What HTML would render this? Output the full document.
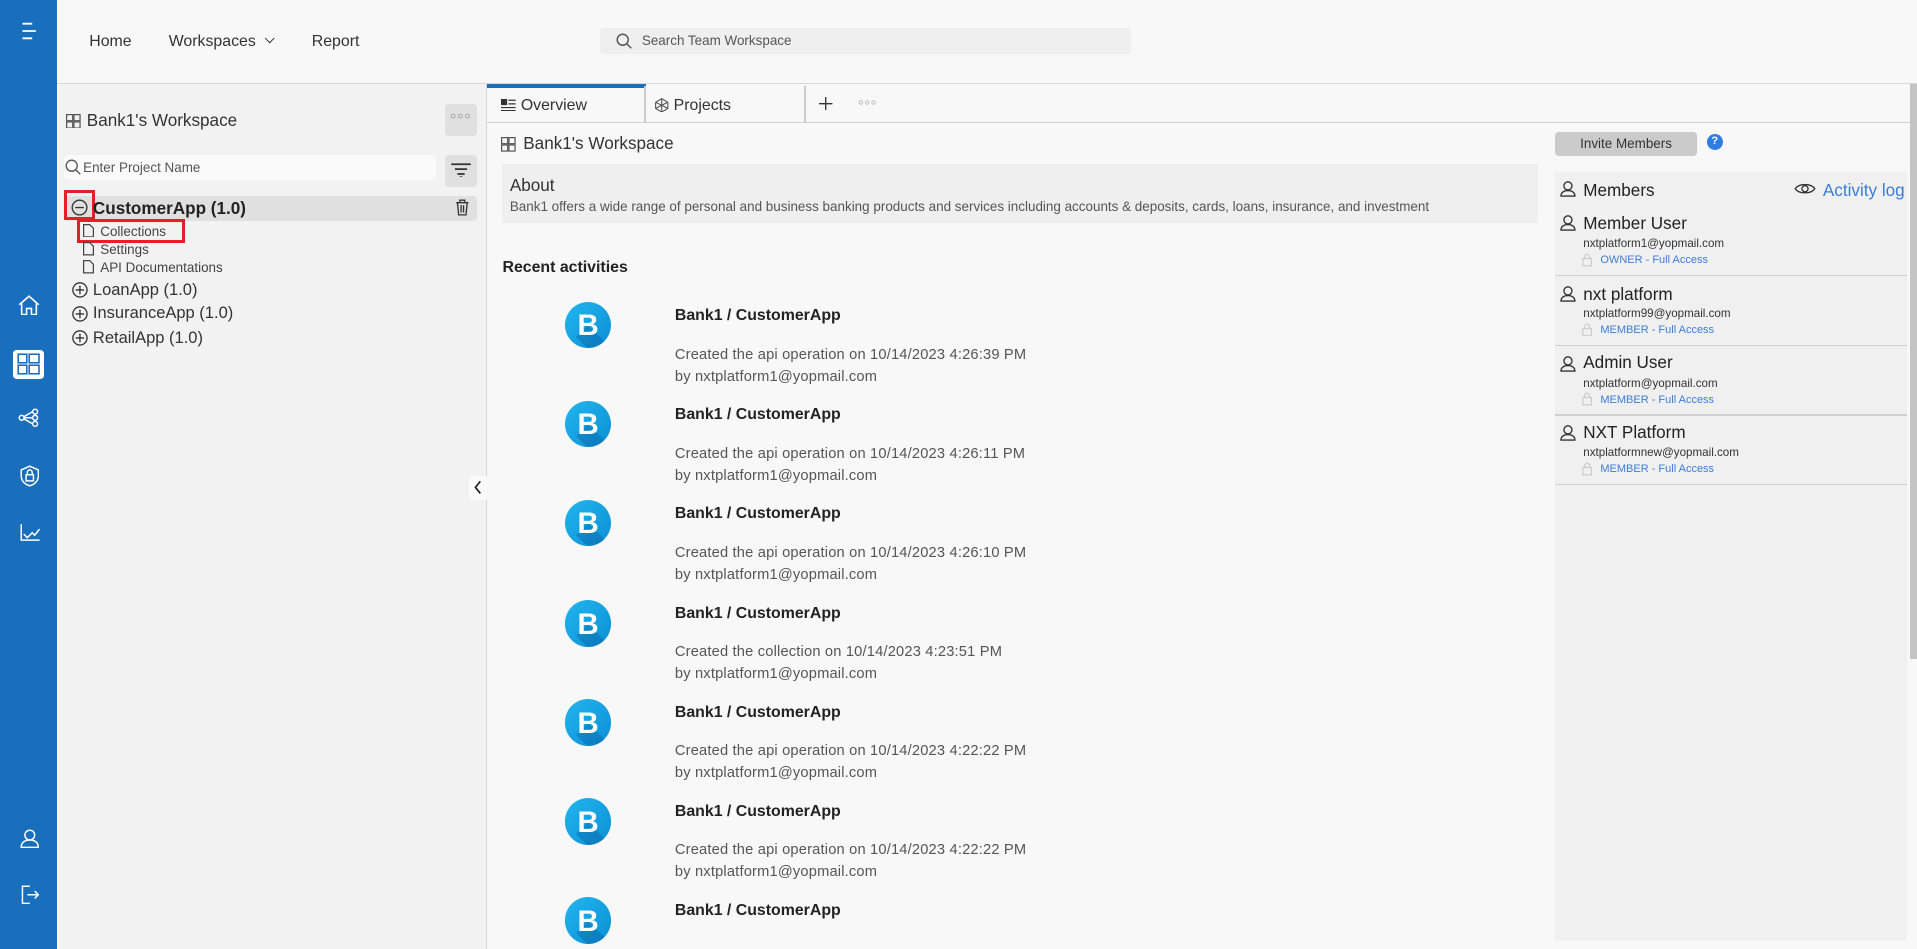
<!DOCTYPE html>
<html><head><meta charset="utf-8"><style>
html{zoom:1.2226}
*{box-sizing:border-box;margin:0;padding:0}
body{width:1568px;height:776px;overflow:hidden;background:#f8f8f8;font-family:"Liberation Sans",sans-serif;color:#333;position:relative}
.a{position:absolute}
.side{left:0;top:0;width:47px;height:776px;background:#1a6fbd}
.top{left:47px;top:0;width:1521px;height:69px;background:#f8f8f8;border-bottom:1px solid #d8d8d8}
.nav{font-size:13px;color:#333;top:26px}
.left{left:48px;top:69px;width:350px;height:707px;background:#f2f2f2;border-right:1px solid #d6d6d6}
.t{white-space:nowrap}
.sub{font-size:11px;color:#444}
.app{font-size:13.5px;color:#333}
.act-logo{width:38px;height:38px;border-radius:50%;background:linear-gradient(135deg,#22b5ee,#0b8fd6);overflow:hidden}
.act-logo:after{content:"";position:absolute;left:19px;top:19px;width:40px;height:14px;background:rgba(0,60,120,.25);transform:rotate(45deg);transform-origin:0 0}
.act-logo b{position:absolute;left:0;top:6px;width:38px;text-align:center;color:#fff;font:900 24px "Liberation Sans",sans-serif;z-index:2}
.at{font-size:13px;font-weight:bold;color:#222}
.al{font-size:12px;color:#555;letter-spacing:.15px}
.mem{font-size:14px;color:#222}
.em{font-size:9.5px;color:#333}
.role{font-size:9px;color:#3b7dd8}
.sep{left:1272px;width:288px;height:1px;background:#d0d0d0}
.lk{position:absolute;left:1293px}
</style></head><body>
<div class="a side">
 <svg class="a" style="left:16px;top:16px" width="16" height="18" viewBox="0 0 16 18" fill="none" stroke="#fff" stroke-width="1.5"><path d="M2 3h8M2 9h11M2 15h8"/></svg>
 <svg class="a" style="left:15px;top:241px" width="18" height="17" viewBox="0 0 18 17" fill="none" stroke="#fff" stroke-width="1.3"><path d="M1 8L9 1l8 7M3 7v9h4v-5h4v5h4V7"/></svg>
 <div class="a" style="left:11px;top:286px;width:25px;height:24px;background:#fff;border-radius:3px"></div>
 <svg class="a" style="left:14px;top:289px" width="19" height="18" viewBox="0 0 19 18" fill="none" stroke="#1a6fbd" stroke-width="1.3"><rect x="1" y="1" width="7" height="7"/><rect x="10" y="1" width="8" height="7"/><rect x="1" y="10" width="7" height="7"/><rect x="10" y="10" width="8" height="7"/></svg>
 <svg class="a" style="left:15px;top:334px" width="18" height="16" viewBox="0 0 18 16" fill="none" stroke="#fff" stroke-width="1.2"><circle cx="3" cy="8" r="2"/><circle cx="14" cy="3" r="2"/><circle cx="14" cy="8" r="2"/><circle cx="14" cy="13" r="2"/><path d="M5 8h7M5 7l7-4M5 9l7 4"/></svg>
 <svg class="a" style="left:16px;top:380px" width="16" height="18" viewBox="0 0 16 18" fill="none" stroke="#fff" stroke-width="1.2"><path d="M8 1l7 3v5c0 4-3 7-7 8-4-1-7-4-7-8V4z"/><rect x="5" y="8" width="6" height="5"/><path d="M6 8V6a2 2 0 0 1 4 0v2"/></svg>
 <svg class="a" style="left:16px;top:428px" width="17" height="15" viewBox="0 0 17 15" fill="none" stroke="#fff" stroke-width="1.2"><path d="M1 1v13h15M3 9l3 3 4-4 2 2 4-5"/></svg>
 <svg class="a" style="left:16px;top:678px" width="16" height="16" viewBox="0 0 16 16" fill="none" stroke="#fff" stroke-width="1.2"><circle cx="8" cy="5" r="4"/><path d="M1 15c0-4 3-6 7-6s7 2 7 6z"/></svg>
 <svg class="a" style="left:16px;top:724px" width="16" height="16" viewBox="0 0 16 16" fill="none" stroke="#fff" stroke-width="1.2"><path d="M8 1H2v14h6M6 8h9M12 5l3 3-3 3"/></svg>
</div>
<div class="a top"></div>
<div class="a nav t" style="left:73px;top:27px">Home</div>
<div class="a nav t" style="left:138px;top:27px">Workspaces <span style="display:inline-block;width:6px;height:6px;border-right:1.3px solid #333;border-bottom:1.3px solid #333;transform:rotate(45deg);margin:0 0 3px 5px"></span></div>
<div class="a nav t" style="left:255px;top:27px">Report</div>
<div class="a" style="left:491px;top:23px;width:434px;height:21px;background:#efefef;border-radius:2px"></div>
<svg class="a" style="left:504px;top:27px" width="13" height="13" viewBox="0 0 13 13" fill="none" stroke="#555" stroke-width="1.2"><circle cx="5.5" cy="5.5" r="4.5"/><path d="M9 9l3.5 3.5"/></svg>
<div class="a t" style="left:525px;top:27px;font-size:11px;color:#555">Search Team Workspace</div>

<div class="a left"></div>
<svg class="a" style="left:54px;top:93px" width="12" height="12" viewBox="0 0 12 12" fill="none" stroke="#555"><rect x=".5" y=".5" width="5" height="5"/><rect x="6.5" y=".5" width="5" height="5"/><rect x=".5" y="6.5" width="5" height="5"/><rect x="6.5" y="6.5" width="5" height="5"/></svg>
<div class="a t" style="left:71px;top:91px;font-size:14px;color:#333">Bank1's Workspace</div>
<div class="a" style="left:364px;top:85px;width:26px;height:26px;background:#e0e0e0;border-radius:3px;font-size:8px;color:#666;text-align:center;line-height:22px;letter-spacing:1px">○○○</div>
<div class="a" style="left:52px;top:127px;width:305px;height:20px;background:#fafafa;border-radius:3px"></div>
<svg class="a" style="left:53px;top:130px" width="13" height="13" viewBox="0 0 13 13" fill="none" stroke="#555" stroke-width="1.1"><circle cx="5.5" cy="5.5" r="4.5"/><path d="M9 9l3.5 3.5"/></svg>
<div class="a t" style="left:68px;top:131px;font-size:11px;color:#555">Enter Project Name</div>
<div class="a" style="left:364px;top:127px;width:26px;height:26px;background:#e0e0e0;border-radius:3px"></div>
<svg class="a" style="left:368px;top:133px" width="18" height="12" viewBox="0 0 18 12" stroke="#333" stroke-width="1.4"><path d="M1 1h16M4 5h10M6 9h6M8 11.5h2"/></svg>
<div class="a" style="left:52px;top:160px;width:338px;height:21px;background:#e0e0e0;border-radius:3px"></div>
<div class="a" style="left:52px;top:155px;width:26px;height:25px;border:3px solid #e32027"></div>
<svg class="a" style="left:58px;top:163px" width="14" height="14" viewBox="0 0 14 14" fill="none" stroke="#333" stroke-width="1.1"><circle cx="7" cy="7" r="6"/><path d="M3.5 7h7"/></svg>
<div class="a t" style="left:76px;top:163px;font-size:14px;font-weight:bold;color:#222">CustomerApp (1.0)</div>
<svg class="a" style="left:372px;top:163px" width="12" height="14" viewBox="0 0 12 14" fill="none" stroke="#333" stroke-width="1.1"><path d="M1 3h10M4 3V1h4v2M2 3l1 10h6l1-10M5 5v6M7 5v6"/></svg>
<div class="a" style="left:63px;top:179px;width:88px;height:20px;border:3px solid #e32027"></div>
<svg class="a" style="left:68px;top:183px" width="9" height="11" viewBox="0 0 9 11" fill="none" stroke="#444"><path d="M.5.5h5l3 3v7h-8z"/></svg>
<div class="a t sub" style="left:82px;top:183px">Collections</div>
<svg class="a" style="left:68px;top:198px" width="9" height="11" viewBox="0 0 9 11" fill="none" stroke="#444"><path d="M.5.5h5l3 3v7h-8z"/></svg>
<div class="a t sub" style="left:82px;top:198px">Settings</div>
<svg class="a" style="left:68px;top:213px" width="9" height="11" viewBox="0 0 9 11" fill="none" stroke="#444"><path d="M.5.5h5l3 3v7h-8z"/></svg>
<div class="a t sub" style="left:82px;top:213px">API Documentations</div>
<svg class="a" style="left:59px;top:231px" width="13" height="13" viewBox="0 0 13 13" fill="none" stroke="#333" stroke-width="1.1"><circle cx="6.5" cy="6.5" r="5.8"/><path d="M3 6.5h7M6.5 3v7"/></svg>
<div class="a t app" style="left:76px;top:230px">LoanApp (1.0)</div>
<svg class="a" style="left:59px;top:250px" width="13" height="13" viewBox="0 0 13 13" fill="none" stroke="#333" stroke-width="1.1"><circle cx="6.5" cy="6.5" r="5.8"/><path d="M3 6.5h7M6.5 3v7"/></svg>
<div class="a t app" style="left:76px;top:249px">InsuranceApp (1.0)</div>
<svg class="a" style="left:59px;top:270px" width="13" height="13" viewBox="0 0 13 13" fill="none" stroke="#333" stroke-width="1.1"><circle cx="6.5" cy="6.5" r="5.8"/><path d="M3 6.5h7M6.5 3v7"/></svg>
<div class="a t app" style="left:76px;top:269px">RetailApp (1.0)</div>
<div class="a" style="left:384px;top:389px;width:14px;height:20px;background:#fafafa;border-radius:3px 0 0 3px"></div>
<svg class="a" style="left:387px;top:393px" width="8" height="12" viewBox="0 0 8 12" fill="none" stroke="#222" stroke-width="1.4"><path d="M6 1L2 6l4 5"/></svg>

<!-- tabs -->
<div class="a" style="left:398px;top:100px;width:1164px;height:1px;background:#d0d0d0"></div>
<div class="a" style="left:398px;top:69px;width:130px;height:3px;background:#1a6fbd"></div>
<div class="a" style="left:527px;top:70px;width:1px;height:31px;background:#ccc"></div>
<div class="a" style="left:658px;top:70px;width:1px;height:31px;background:#ccc"></div>
<svg class="a" style="left:410px;top:81px" width="12" height="10" viewBox="0 0 12 10"><rect x="0" y="0" width="5" height="5" fill="#333"/><path d="M6 1h6M6 4h6M0 7h12M0 9.5h12" stroke="#333"/></svg>
<div class="a t" style="left:426px;top:79px;font-size:13px;color:#333">Overview</div>
<svg class="a" style="left:536px;top:80px" width="11" height="12" viewBox="0 0 11 12" fill="none" stroke="#555" stroke-width=".9"><path d="M5.5 .5l5 3v5l-5 3-5-3v-5zM5.5.5v11M.5 3.5l10 5M10.5 3.5l-10 5"/></svg>
<div class="a t" style="left:551px;top:79px;font-size:13px;color:#333">Projects</div>
<svg class="a" style="left:670px;top:79px" width="11" height="11" stroke="#333" stroke-width="1.1"><path d="M5.5 0v11M0 5.5h11"/></svg>
<div class="a t" style="left:702px;top:79px;font-size:7px;color:#666;letter-spacing:1px">○○○</div>

<svg class="a" style="left:410px;top:112px" width="12" height="12" viewBox="0 0 12 12" fill="none" stroke="#555"><rect x=".5" y=".5" width="5" height="5"/><rect x="6.5" y=".5" width="5" height="5"/><rect x=".5" y="6.5" width="5" height="5"/><rect x="6.5" y="6.5" width="5" height="5"/></svg>
<div class="a t" style="left:428px;top:110px;font-size:14px;color:#333">Bank1's Workspace</div>
<div class="a" style="left:411px;top:134px;width:847px;height:48px;background:#efefef"></div>
<div class="a t" style="left:417px;top:144px;font-size:14px;color:#333">About</div>
<div class="a t" style="left:417px;top:163px;font-size:11px;color:#555">Bank1 offers a wide range of personal and business banking products and services including accounts &amp; deposits, cards, loans, insurance, and investment</div>
<div class="a t" style="left:411px;top:212px;font-size:13px;font-weight:bold;color:#222">Recent activities</div>

<div class="a act-logo" style="left:462px;top:247px"><b>B</b></div>
<div class="a t at" style="left:552px;top:251px">Bank1 / CustomerApp</div>
<div class="a t al" style="left:552px;top:284px">Created the api operation on 10/14/2023 4:26:39 PM</div>
<div class="a t al" style="left:552px;top:302px">by nxtplatform1@yopmail.com</div>

<div class="a act-logo" style="left:462px;top:328px"><b>B</b></div>
<div class="a t at" style="left:552px;top:332px">Bank1 / CustomerApp</div>
<div class="a t al" style="left:552px;top:365px">Created the api operation on 10/14/2023 4:26:11 PM</div>
<div class="a t al" style="left:552px;top:383px">by nxtplatform1@yopmail.com</div>

<div class="a act-logo" style="left:462px;top:409px"><b>B</b></div>
<div class="a t at" style="left:552px;top:413px">Bank1 / CustomerApp</div>
<div class="a t al" style="left:552px;top:446px">Created the api operation on 10/14/2023 4:26:10 PM</div>
<div class="a t al" style="left:552px;top:464px">by nxtplatform1@yopmail.com</div>

<div class="a act-logo" style="left:462px;top:491px"><b>B</b></div>
<div class="a t at" style="left:552px;top:495px">Bank1 / CustomerApp</div>
<div class="a t al" style="left:552px;top:527px">Created the collection on 10/14/2023 4:23:51 PM</div>
<div class="a t al" style="left:552px;top:545px">by nxtplatform1@yopmail.com</div>

<div class="a act-logo" style="left:462px;top:572px"><b>B</b></div>
<div class="a t at" style="left:552px;top:576px">Bank1 / CustomerApp</div>
<div class="a t al" style="left:552px;top:608px">Created the api operation on 10/14/2023 4:22:22 PM</div>
<div class="a t al" style="left:552px;top:626px">by nxtplatform1@yopmail.com</div>

<div class="a act-logo" style="left:462px;top:653px"><b>B</b></div>
<div class="a t at" style="left:552px;top:657px">Bank1 / CustomerApp</div>
<div class="a t al" style="left:552px;top:689px">Created the api operation on 10/14/2023 4:22:22 PM</div>
<div class="a t al" style="left:552px;top:707px">by nxtplatform1@yopmail.com</div>

<div class="a act-logo" style="left:462px;top:734px"><b>B</b></div>
<div class="a t at" style="left:552px;top:738px">Bank1 / CustomerApp</div>

<!-- right -->
<div class="a" style="left:1272px;top:108px;width:116px;height:20px;background:#cbcbcb;border-radius:3px;font-size:11px;color:#333;text-align:center;line-height:20px">Invite Members</div>
<div class="a" style="left:1396px;top:110px;width:13px;height:13px;border-radius:50%;background:#2f7de1;color:#fff;font-size:9px;font-weight:bold;text-align:center;line-height:13px">?</div>
<div class="a" style="left:1272px;top:141px;width:288px;height:629px;background:#f0f0f0"></div>
<svg class="a" style="left:1276px;top:148px" width="13" height="13" viewBox="0 0 13 13" fill="none" stroke="#333" stroke-width="1.1"><circle cx="6.5" cy="4" r="3.3"/><path d="M.8 12.3c0-3 2.5-4.5 5.7-4.5s5.7 1.5 5.7 4.5z"/></svg>
<div class="a t mem" style="left:1295px;top:148px">Members</div>
<svg class="a" style="left:1467px;top:149px" width="18" height="11" viewBox="0 0 18 11" fill="none" stroke="#333" stroke-width="1.1"><path d="M1 5.5C4 1 14 1 17 5.5 14 10 4 10 1 5.5z"/><circle cx="9" cy="5.5" r="2.5"/></svg>
<div class="a t" style="left:1491px;top:148px;font-size:14px;color:#3b7dd8">Activity log</div>

<svg class="a" style="left:1276px;top:176px" width="13" height="13" viewBox="0 0 13 13" fill="none" stroke="#333" stroke-width="1.1"><circle cx="6.5" cy="4" r="3.3"/><path d="M.8 12.3c0-3 2.5-4.5 5.7-4.5s5.7 1.5 5.7 4.5z"/></svg>
<div class="a t mem" style="left:1295px;top:175px">Member User</div>
<div class="a t em" style="left:1295px;top:194px">nxtplatform1@yopmail.com</div>
<svg class="lk" style="top:207px" width="10" height="11" viewBox="0 0 10 11" fill="none" stroke="#ccc"><rect x="1.5" y="4.5" width="7" height="6"/><path d="M3 4.5V3a2 2 0 0 1 4 0v1.5"/></svg>
<div class="a t role" style="left:1309px;top:208px">OWNER - Full Access</div>
<div class="a sep" style="top:225px"></div>

<svg class="a" style="left:1276px;top:234px" width="13" height="13" viewBox="0 0 13 13" fill="none" stroke="#333" stroke-width="1.1"><circle cx="6.5" cy="4" r="3.3"/><path d="M.8 12.3c0-3 2.5-4.5 5.7-4.5s5.7 1.5 5.7 4.5z"/></svg>
<div class="a t mem" style="left:1295px;top:233px">nxt platform</div>
<div class="a t em" style="left:1295px;top:251px">nxtplatform99@yopmail.com</div>
<svg class="lk" style="top:264px" width="10" height="11" viewBox="0 0 10 11" fill="none" stroke="#ccc"><rect x="1.5" y="4.5" width="7" height="6"/><path d="M3 4.5V3a2 2 0 0 1 4 0v1.5"/></svg>
<div class="a t role" style="left:1309px;top:265px">MEMBER - Full Access</div>
<div class="a sep" style="top:282px"></div>

<svg class="a" style="left:1276px;top:291px" width="13" height="13" viewBox="0 0 13 13" fill="none" stroke="#333" stroke-width="1.1"><circle cx="6.5" cy="4" r="3.3"/><path d="M.8 12.3c0-3 2.5-4.5 5.7-4.5s5.7 1.5 5.7 4.5z"/></svg>
<div class="a t mem" style="left:1295px;top:289px">Admin User</div>
<div class="a t em" style="left:1295px;top:308px">nxtplatform@yopmail.com</div>
<svg class="lk" style="top:321px" width="10" height="11" viewBox="0 0 10 11" fill="none" stroke="#ccc"><rect x="1.5" y="4.5" width="7" height="6"/><path d="M3 4.5V3a2 2 0 0 1 4 0v1.5"/></svg>
<div class="a t role" style="left:1309px;top:322px">MEMBER - Full Access</div>
<div class="a sep" style="top:339px"></div>

<svg class="a" style="left:1276px;top:348px" width="13" height="13" viewBox="0 0 13 13" fill="none" stroke="#333" stroke-width="1.1"><circle cx="6.5" cy="4" r="3.3"/><path d="M.8 12.3c0-3 2.5-4.5 5.7-4.5s5.7 1.5 5.7 4.5z"/></svg>
<div class="a t mem" style="left:1295px;top:346px">NXT Platform</div>
<div class="a t em" style="left:1295px;top:365px">nxtplatformnew@yopmail.com</div>
<svg class="lk" style="top:378px" width="10" height="11" viewBox="0 0 10 11" fill="none" stroke="#ccc"><rect x="1.5" y="4.5" width="7" height="6"/><path d="M3 4.5V3a2 2 0 0 1 4 0v1.5"/></svg>
<div class="a t role" style="left:1309px;top:379px">MEMBER - Full Access</div>
<div class="a sep" style="top:396px"></div>

<div class="a" style="left:1562px;top:69px;width:6px;height:470px;background:#c4c4c4"></div>
</body></html>
